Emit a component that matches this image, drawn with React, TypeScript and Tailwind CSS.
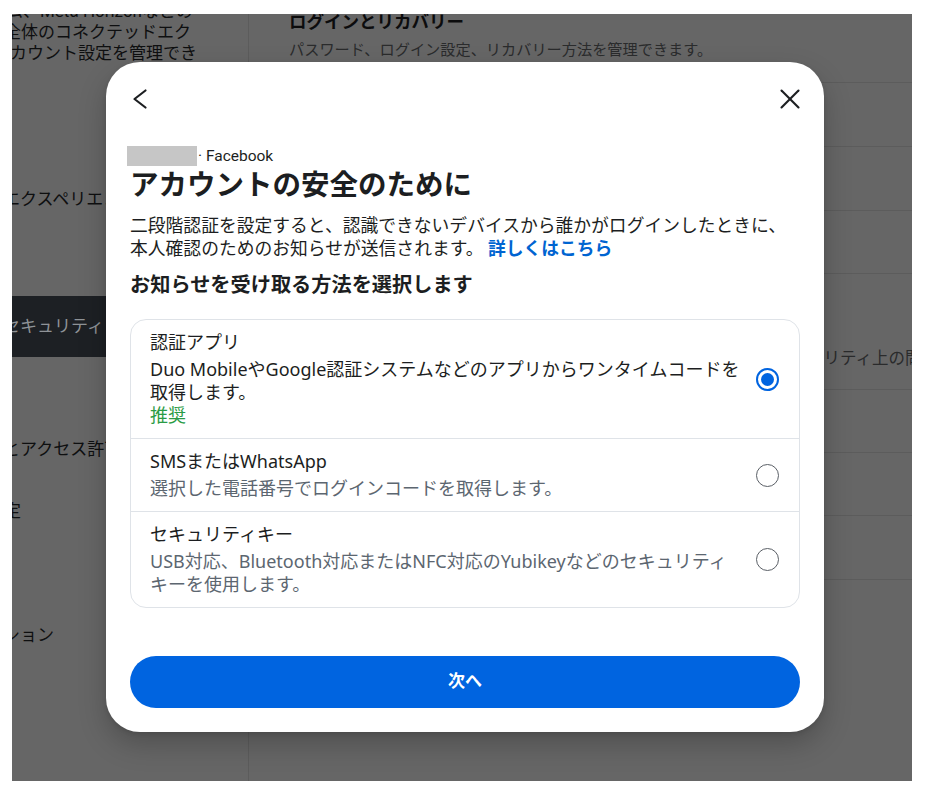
import { ReactNode } from "react"

function Radio({ checked }: { checked?: boolean }) {
    if (checked) {
        return (
            <div className="w-[23px] h-[23px] shrink-0 rounded-full border-2 border-[#0064e0] flex items-center justify-center">
                <div className="w-[13px] h-[13px] rounded-full bg-[#0064e0]" />
            </div>
        )
    }
    return <div className="w-[23px] h-[23px] shrink-0 rounded-full border-[1.6px] border-[#5a5f66]" />
}

function Option({ title, children, checked, last }: { title: string; children: ReactNode; checked?: boolean; last?: boolean }) {
    return (
        <div className={`flex items-center gap-3 pl-[19px] pr-[20px] pt-[11px] pb-[11px] ${last ? "" : "border-b border-[#dfe3e8]"}`}>
            <div className="flex-1 min-w-0 font-['Noto_Sans','Noto_Sans_CJK_JP',sans-serif]">
                <p className="text-[18px] leading-[23px] text-[#1c1e21]">{title}</p>
                <div className={`mt-[4px] text-[18px] leading-[23px] whitespace-nowrap ${checked ? "text-[#1c1e21]" : "text-[#5c6670]"}`}>
                    {children}
                </div>
            </div>
            <Radio checked={checked} />
        </div>
    )
}

export default function App() {
    const rows = [64, 64, 63, 116, 63, 63, 64, 64]
    return (
        <div className="w-[927px] h-[796px] bg-white pt-[14px] pl-[12px] font-[Roboto,'Noto_Sans_CJK_JP',sans-serif]">
            {/* dimmed page behind the dialog */}
            <div className="relative w-[900px] h-[767px] bg-[#666666] overflow-hidden flex">
                {/* sidebar */}
                <div className="w-[237px] shrink-0 overflow-hidden border-r border-[#5c5c5c] text-[17px] text-[#0e0f10] whitespace-nowrap">
                    <div className="-mt-[13px] leading-[21px]">
                        <p className="-ml-[6px]">ム、Meta Horizonなどの</p>
                        <p className="-ml-[8px]">全体のコネクテッドエク</p>
                        <p className="-ml-[19px]">アカウント設定を管理でき</p>
                    </div>
                    <div className="mt-[105px]">
                        <div className="h-[62px] flex items-center -ml-[9px]">エクスペリエンス</div>
                        <div className="h-[65px]" />
                        <div className="h-[61px] flex items-center bg-[#1d2024] text-[#8f9397]">
                            <span className="-ml-[9px]">セキュリティ</span>
                        </div>
                        <div className="h-[62px]" />
                        <div className="h-[62px] flex items-center -ml-[9px]">とアクセス許可</div>
                        <div className="h-[62px] flex items-center -ml-[25px]">設定</div>
                        <div className="h-[62px]" />
                        <div className="h-[62px] flex items-center -ml-[9px]">ション</div>
                    </div>
                </div>

                {/* main content */}
                <div className="flex-1 pl-[40px] whitespace-nowrap">
                    <div className="-mt-[3px]">
                        <p className="text-[17.5px] leading-[22px] font-bold text-[#0c0c0d]">ログインとリカバリー</p>
                        <p className="mt-[7px] text-[15.2px] leading-[20px] text-[#2a2b2c]">パスワード、ログイン設定、リカバリー方法を管理できます。</p>
                    </div>
                    <div className="mt-[22px]">
                        {rows.map((h, i) => (
                            <div key={i} style={{ height: h }} className="border-t border-[#5c5c5c] flex items-end">
                                {i === 3 && (
                                    <p className="ml-[485px] mb-[20px] text-[16.5px] leading-[20px] text-[#2a2b2c]">セキュリティ上の問題を確認</p>
                                )}
                            </div>
                        ))}
                    </div>
                </div>

                {/* dialog */}
                <div className="absolute left-[94px] top-[48px] w-[718px] bg-white rounded-[34px] px-6 pb-6 shadow-[0_12px_28px_rgba(0,0,0,0.22),0_2px_4px_rgba(0,0,0,0.1)]">
                    <div className="flex items-center justify-between pt-[25px] -mx-[2px]">
                        <svg width="24" height="24" viewBox="0 0 24 24" fill="none" stroke="#1c1e21" strokeWidth="2.2" strokeLinecap="round" strokeLinejoin="round">
                            <polyline points="17.5,3.5 6.5,12 17.5,20.5" />
                        </svg>
                        <svg width="24" height="24" viewBox="0 0 24 24" fill="none" stroke="#1c1e21" strokeWidth="2.1" strokeLinecap="round">
                            <line x1="3.5" y1="3.5" x2="20.5" y2="20.5" />
                            <line x1="20.5" y1="3.5" x2="3.5" y2="20.5" />
                        </svg>
                    </div>

                    <div className="mt-[35px] flex items-center h-[20px]">
                        <div className="w-[70px] h-[20px] bg-[#c6c6c6] -ml-[3px]" />
                        <span className="ml-[1px] text-[15.5px] leading-[20px] text-[#1c1e21]">· Facebook</span>
                    </div>

                    <h1 className="mt-[3px] text-[28.5px] leading-[34px] font-bold text-[#1c1e21]">アカウントの安全のために</h1>

                    <p className="mt-[11px] text-[17.8px] leading-[23px] text-[#1c1e21] whitespace-nowrap">
                        二段階認証を設定すると、認識できないデバイスから誰かがログインしたときに、
                        <br />
                        本人確認のためのお知らせが送信されます。 <span className="font-bold text-[#0064d1]">詳しくはこちら</span>
                    </p>

                    <h2 className="mt-[12px] text-[20.2px] leading-[26px] font-bold text-[#1c1e21]">お知らせを受け取る方法を選択します</h2>

                    <div className="mt-[21px] border border-[#dfe3e8] rounded-[16px]">
                        <Option title="認証アプリ" checked>
                            Duo MobileやGoogle認証システムなどのアプリからワンタイムコードを
                            <br />
                            取得します。
                            <br />
                            <span className="text-[#2a9b45]">推奨</span>
                        </Option>
                        <Option title="SMSまたはWhatsApp">選択した電話番号でログインコードを取得します。</Option>
                        <Option title="セキュリティキー" last>
                            USB対応、Bluetooth対応またはNFC対応のYubikeyなどのセキュリティ
                            <br />
                            キーを使用します。
                        </Option>
                    </div>

                    <button className="mt-[48px] w-full h-[52px] rounded-full bg-[#0064e0] text-white text-[17px] font-bold">次へ</button>
                </div>
            </div>
        </div>
    )
}
